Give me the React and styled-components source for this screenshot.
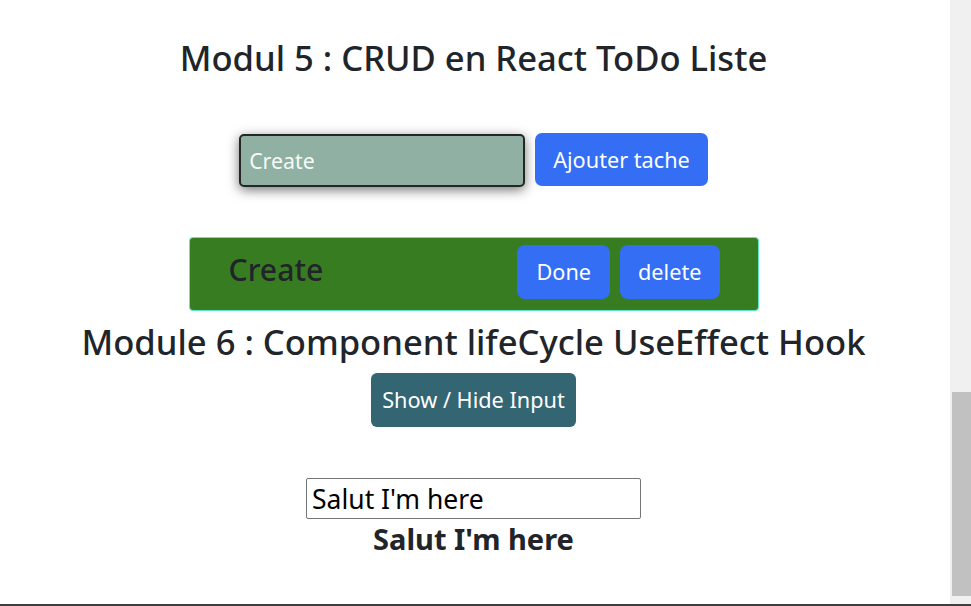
import React from "react";
import styled, { createGlobalStyle } from "styled-components";

const GlobalStyle = createGlobalStyle`
  html, body {
    margin: 0;
    padding: 0;
    background: #ffffff;
    overflow: hidden;
  }
  * { box-sizing: border-box; }
  body {
    font-family: "Noto Sans", "Open Sans", sans-serif;
    color: #212529;
  }
`;

const Frame = styled.div`
  display: flex;
  flex-direction: column;
  width: 971px;
  height: 606px;
`;

const Viewport = styled.div`
  display: flex;
  flex: 1;
  min-height: 0;
`;

const Main = styled.main`
  flex: 1;
  display: flex;
  flex-direction: column;
  align-items: center;
  padding: 37px 3px 0 0;
`;

const Scrollbar = styled.div`
  width: 21px;
  background: #f0f0f0;
  padding: 392px 0 0 2px;
`;

const Thumb = styled.div`
  height: 204px;
  background: #c1c1c1;
`;

const BottomLine = styled.div`
  height: 2px;
  background: #3e3e3e;
`;

const Title = styled.h1`
  margin: ${(p) => p.$mt || 0}px 0 0;
  font-size: 34.6px;
  font-weight: 500;
  line-height: 41px;
  color: #212529;
  text-align: center;
  white-space: nowrap;
`;

const FormRow = styled.form`
  display: flex;
  align-items: flex-start;
  gap: 10px;
  margin-top: 55px;
`;

const TaskInput = styled.input`
  width: 286px;
  height: 53px;
  margin-top: 1px;
  padding: 0 8px;
  font-family: inherit;
  font-size: 21.3px;
  color: #f4fbf6;
  background: #8fb0a3;
  border: 2px solid #262626;
  border-radius: 5px;
  box-shadow: 0 3px 12px rgba(0, 0, 0, 0.55);
  outline: none;
  &::placeholder { color: #f4fbf6; opacity: 1; }
`;

const Button = styled.button`
  height: ${(p) => p.$h || 53}px;
  padding: 0 ${(p) => p.$px || 18}px;
  font-family: inherit;
  font-size: 21.7px;
  font-weight: 400;
  line-height: 1;
  color: #ffffff;
  background: ${(p) => p.$bg || "#336ef5"};
  border: none;
  border-radius: ${(p) => p.$r || 7}px;
  cursor: pointer;
  white-space: nowrap;
`;

const TaskCard = styled.div`
  display: flex;
  align-items: flex-start;
  justify-content: space-between;
  width: 570px;
  height: 74px;
  margin-top: 50px;
  padding: 7px 38px 0 39px;
  background: #387c22;
  border: 1px solid #5fe6c4;
  border-radius: 4px;
`;

const TaskName = styled.h2`
  margin: 7px 0 0;
  font-size: 30.2px;
  font-weight: 500;
  line-height: 36px;
  color: #212529;
`;

const Actions = styled.div`
  display: flex;
  gap: 10px;
`;

const ToggleButton = styled(Button)`
  margin-top: 11px;
`;

const EchoInput = styled.input`
  width: 335px;
  height: 41px;
  margin-top: 51px;
  padding: 0 5px;
  font-family: inherit;
  font-size: 26.5px;
  color: #000;
  background: #fff;
  border: 1px solid #767676;
  border-radius: 2px;
  outline: none;
`;

const EchoText = styled.h3`
  margin: 3px 0 0;
  font-size: 29px;
  font-weight: 700;
  line-height: 1.2;
  color: #212529;
`;

export default function App() {
  return (
    <>
      <GlobalStyle />
      <Frame>
        <Viewport>
          <Main>
            <Title>Modul 5 : CRUD en React ToDo Liste</Title>
            <FormRow onSubmit={(e) => e.preventDefault()}>
              <TaskInput type="text" placeholder="Create" />
              <Button type="submit" $px={18}>Ajouter tache</Button>
            </FormRow>
            <TaskCard>
              <TaskName>Create</TaskName>
              <Actions>
                <Button $h={54} $px={19} $r={8}>Done</Button>
                <Button $h={54} $px={18} $r={8}>delete</Button>
              </Actions>
            </TaskCard>
            <Title $mt={10}>Module 6 : Component lifeCycle UseEffect Hook</Title>
            <ToggleButton $h={54} $px={11} $r={6} $bg="#336573">
              Show / Hide Input
            </ToggleButton>
            <EchoInput type="text" defaultValue="Salut I'm here" />
            <EchoText>Salut I'm here</EchoText>
          </Main>
          <Scrollbar>
            <Thumb />
          </Scrollbar>
        </Viewport>
        <BottomLine />
      </Frame>
    </>
  );
}
